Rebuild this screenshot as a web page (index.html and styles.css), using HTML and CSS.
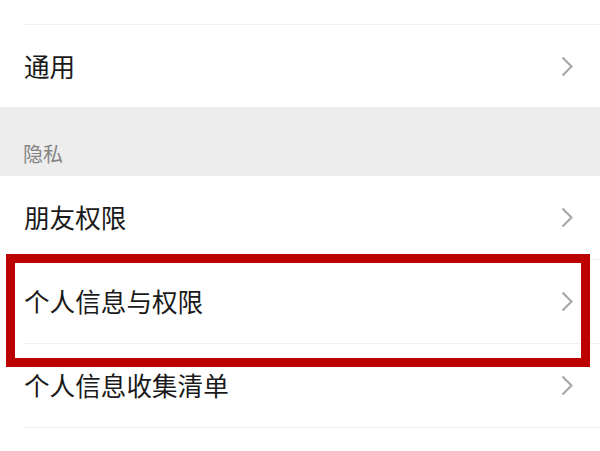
FILE: index.html
```html
<!DOCTYPE html>
<html lang="zh-CN">
<head>
<meta charset="utf-8">
<title>设置</title>
<link rel="stylesheet" href="styles.css">
</head>
<body>
<div class="page">
  <div class="top-space"></div>
  <div class="group">
    <div class="row row-first">
      <span class="label">通用</span>
      <svg class="chev" viewBox="0 0 12 21" width="12" height="21"><polyline points="1.5,1.5 10.5,10.5 1.5,19.5" /></svg>
    </div>
  </div>
  <div class="section-title">隐私</div>
  <div class="group">
    <div class="row">
      <span class="label">朋友权限</span>
      <svg class="chev" viewBox="0 0 12 21" width="12" height="21"><polyline points="1.5,1.5 10.5,10.5 1.5,19.5" /></svg>
    </div>
    <div class="row">
      <span class="label">个人信息与权限</span>
      <svg class="chev" viewBox="0 0 12 21" width="12" height="21"><polyline points="1.5,1.5 10.5,10.5 1.5,19.5" /></svg>
    </div>
    <div class="row">
      <span class="label">个人信息收集清单</span>
      <svg class="chev" viewBox="0 0 12 21" width="12" height="21"><polyline points="1.5,1.5 10.5,10.5 1.5,19.5" /></svg>
    </div>
  </div>
  <div class="highlight"></div>
</div>
</body>
</html>
```
FILE: styles.css
```css
html, body {
  margin: 0;
  padding: 0;
  background: #ffffff;
}
body {
  width: 600px;
  height: 451px;
  overflow: hidden;
  font-family: "Noto Sans CJK SC", "Noto Sans", sans-serif;
}
.page {
  position: relative;
  width: 600px;
  height: 451px;
  background: #ffffff;
}
.top-space {
  height: 24px;
}
.group {
  background: #ffffff;
}
.row {
  height: 83px;
  margin-left: 24px;
  padding-right: 27px;
  border-bottom: 1px solid #f0f0f0;
  display: flex;
  align-items: center;
  justify-content: space-between;
}
.row-first {
  height: 82px;
  border-bottom: none;
  border-top: 1px solid #f0f0f0;
}
.label {
  font-size: 25.6px;
  color: #1a1a1a;
  line-height: 1;
  margin-top: -1px;
}
.chev {
  display: block;
  fill: none;
  stroke: #a8a8a8;
  stroke-width: 2.2;
}
.section-title {
  height: 69px;
  background: #ededed;
  box-sizing: border-box;
  padding: 35px 0 0 23px;
  font-size: 20px;
  line-height: 24px;
  color: #858585;
}
.highlight {
  position: absolute;
  left: 6px;
  top: 254px;
  width: 566px;
  height: 95px;
  border: 9px solid #bc0000;
}
```
